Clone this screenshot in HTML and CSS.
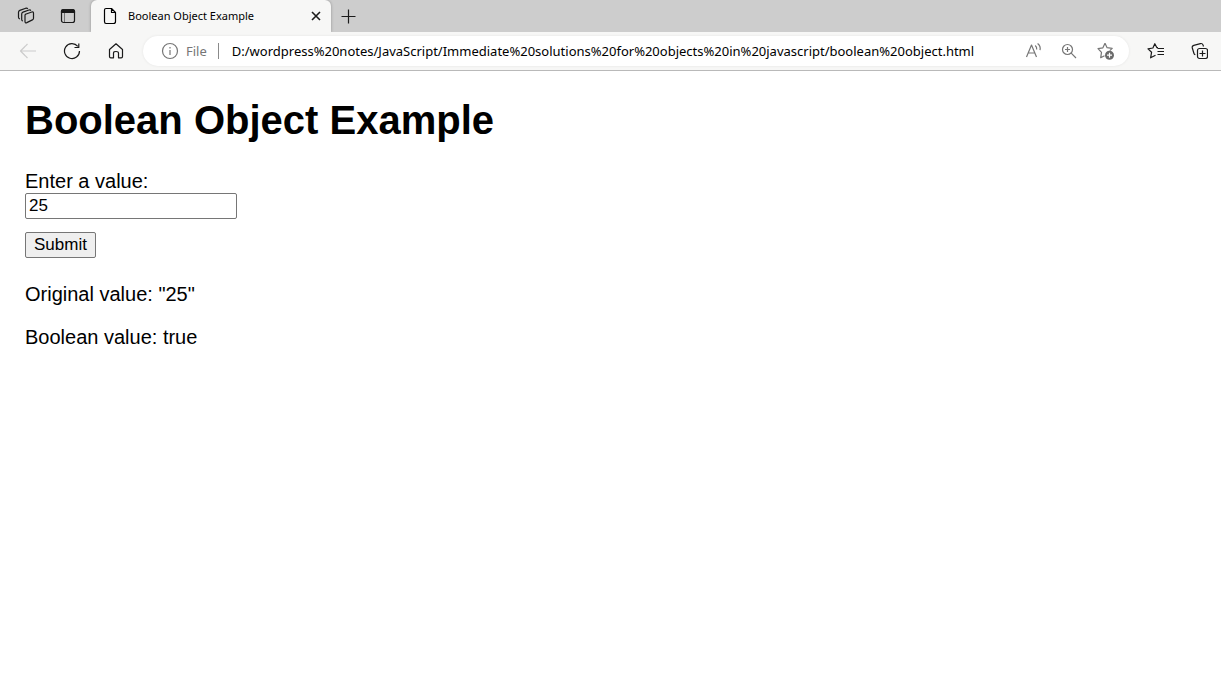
FILE: index.html
```html
<!DOCTYPE html>
<html lang="en">
<head>
  <meta charset="UTF-8">
  <meta name="viewport" content="width=device-width, initial-scale=1.0">
  <title>Boolean Object Example</title>
  <link rel="stylesheet" href="styles.css">
</head>
<body>

  <!-- Browser window -->
  <header class="browser">
    <div class="tab-strip">
      <button class="strip-btn" aria-label="Workspaces">
        <svg width="18" height="18" viewBox="0 0 18 18">
          <path d="M8.5 7.2 L14.8 5 Q16.5 4.6 16.5 6.2 V11.2 Q16.5 12.4 15.4 12.9 L9.8 15.6 Q8 16.3 8 14.6 V8.2 Q8 7.4 8.8 7.1"/>
          <path d="M6 14 Q4.7 13.9 4.7 12.5 V7 Q4.7 5.6 6 5.1 L12 3 Q13.4 2.6 13.8 3.8"/>
          <path d="M3 12 Q1.5 11.8 1.5 10.3 V5.2 Q1.5 3.9 2.8 3.4 L8.8 1.2 Q10.2 .9 10.8 2"/>
        </svg>
      </button>
      <button class="strip-btn" aria-label="Tab actions menu">
        <svg width="16" height="16" viewBox="0 0 16 16">
          <rect x="1.5" y="1.5" width="13" height="13" rx="2"/>
          <path class="solid" d="M1.5 4.4 V3.5 Q1.5 1.5 3.5 1.5 H12.5 Q14.5 1.5 14.5 3.5 V4.4 Z"/>
          <path class="faint" d="M4.5 5 V14"/>
        </svg>
      </button>
      <div class="tab">
        <svg width="16" height="18" viewBox="0 0 16 18">
          <path d="M4 1.5 H9.5 L13.5 5.5 V14.5 Q13.5 16.5 11.5 16.5 H4 Q2.5 16.5 2.5 14.5 V3 Q2.5 1.5 4 1.5 Z M9.5 1.5 V5.5 H13.5"/>
        </svg>
        <span class="tab-title">Boolean Object Example</span>
        <button class="tab-close" aria-label="Close tab">
          <svg width="10" height="10" viewBox="0 0 10 10"><path class="bold" d="M1 1 L9 9 M9 1 L1 9"/></svg>
        </button>
      </div>
      <button class="new-tab" aria-label="New tab">
        <svg width="15" height="15" viewBox="0 0 15 15"><path d="M7.5 .5 V14.5 M.5 7.5 H14.5"/></svg>
      </button>
    </div>

    <div class="toolbar">
      <button class="tool-btn disabled" aria-label="Back" disabled>
        <svg width="18" height="16" viewBox="0 0 18 16"><path d="M17 8 H1.5 M8.5 1 L1.5 8 L8.5 15"/></svg>
      </button>
      <button class="tool-btn" aria-label="Refresh">
        <svg width="18" height="18" viewBox="0 0 18 18"><path d="M16.5 9 A7.5 7.5 0 1 1 14.8 4.3 M15.8 1.5 V5.5 H11.5"/></svg>
      </button>
      <button class="tool-btn" aria-label="Home">
        <svg width="16" height="18" viewBox="0 0 16 18">
          <path d="M1.5 7.5 L8 1.8 L14.5 7.5 V14.5 Q14.5 15.8 13.2 15.8 H10.5 V11 Q10.5 9.5 8 9.5 Q5.5 9.5 5.5 11 V15.8 H2.8 Q1.5 15.8 1.5 14.5 Z"/>
        </svg>
      </button>

      <div class="address-bar">
        <svg width="18" height="18" viewBox="0 0 18 18">
          <circle cx="9" cy="9" r="7.5"/>
          <path d="M9 8 V13 M9 5 V6.5"/>
        </svg>
        <span class="scheme">File</span>
        <input class="url" type="text" aria-label="Address" value="D:/wordpress%20notes/JavaScript/Immediate%20solutions%20for%20objects%20in%20javascript/boolean%20object.html">
        <button class="address-btn" aria-label="Read aloud">
          <svg width="18" height="18" viewBox="0 0 18 18">
            <path d="M2.5 15 L7.5 3 L12.5 15 M4.2 11 H10.8 M11.2 3.5 Q13 5 12.7 7.5 M13.6 1.5 Q17 4.3 16 8.2"/>
          </svg>
        </button>
        <button class="address-btn" aria-label="Zoom">
          <svg width="16" height="16" viewBox="0 0 16 16">
            <circle cx="6.5" cy="6.5" r="5"/>
            <path d="M10.2 10.2 L15 15 M6.5 4 V9 M4 6.5 H9"/>
          </svg>
        </button>
        <button class="address-btn" aria-label="Add to favorites">
          <svg width="18" height="18" viewBox="0 0 18 18">
            <path d="M9 1.3 L11.1 5.7 L16.2 6.4 L13.8 8.6 M8.5 13.7 L4.7 15.7 L5.5 10.4 L2 6.7 L6.9 5.8 L9 1.3"/>
            <circle class="badge" cx="13.5" cy="13.2" r="4.5"/>
            <path class="badge-plus" d="M13.5 10.7 V15.7 M11 13.2 H16"/>
          </svg>
        </button>
      </div>

      <button class="tool-btn" aria-label="Favorites">
        <svg width="18" height="18" viewBox="0 0 18 18">
          <path d="M12 5.5 L10.8 5.6 L8.8 1.7 L6.9 6 L2 6.9 L5.6 10.2 L4.6 15.8 L9.5 13.2 M11.5 6.5 H18 M11.5 9.5 H18 M11.5 12.5 H18"/>
        </svg>
      </button>
      <button class="tool-btn" aria-label="Collections">
        <svg width="18" height="18" viewBox="0 0 18 18">
          <rect x="7.5" y="6.5" width="10" height="10" rx="2"/>
          <path d="M12.5 8.5 V14.5 M9.5 11.5 H15.5 M5.3 12.8 Q4.3 12.4 3.9 11.2 L2.3 6 Q1.8 4 3.8 3.4 L10.4 1.6 Q12.3 1.1 13 2.9 L13.5 4.5"/>
        </svg>
      </button>
    </div>
  </header>

  <!-- Page content -->
  <main class="page">
    <h1>Boolean Object Example</h1>
    <form id="form">
      <label for="value">Enter a value:</label>
      <input class="value-input" type="text" id="value" value="25">
      <button class="submit-btn" type="button">Submit</button>
    </form>
    <p>Original value: "25"</p>
    <p>Boolean value: true</p>
  </main>

</body>
</html>
```
FILE: styles.css
```css
* {
  box-sizing: border-box;
}

body {
  margin: 0;
  background-color: #ffffff;
  color: #000000;
  font-family: "Liberation Sans", Arial, sans-serif;
  font-size: 20px;
  line-height: 23px;
}

/* Browser window */
.browser {
  font-family: "Noto Sans", "Open Sans", sans-serif;
  font-size: 13px;
  line-height: 18px;
  background-color: #f7f7f6;
  border-bottom: 1px solid #b9b9b9;
}

.browser button {
  display: flex;
  flex: none;
  align-items: center;
  justify-content: center;
  padding: 0;
  border: none;
  background: none;
  color: #1b1b1b;
}

.browser svg {
  flex: none;
  fill: none;
  stroke: currentColor;
  stroke-width: 1.2;
  stroke-linejoin: round;
}

.browser .solid {
  fill: currentColor;
}

.browser .faint {
  stroke-width: 1;
  opacity: 0.5;
}

.browser .bold {
  stroke-width: 1.6;
}

.tab-strip {
  display: flex;
  height: 32px;
  padding-left: 5px;
  background-color: #cdcdcd;
}

.strip-btn {
  width: 42px;
}

.tab {
  display: flex;
  align-items: center;
  width: 240px;
  margin-left: 2px;
  padding: 0 8px 0 11px;
  border-radius: 6px 6px 0 0;
  background-color: #f7f7f6;
  box-shadow: 0 0 3px rgba(0, 0, 0, 0.3);
  clip-path: inset(0 -4px);
}

.tab-title {
  flex: 1;
  margin-left: 10px;
  font-size: 11px;
}

.tab-close {
  width: 14px;
}

.new-tab {
  width: 34px;
}

/* Toolbar */
.toolbar {
  display: flex;
  align-items: center;
  height: 38px;
  padding-left: 6px;
}

.tool-btn {
  width: 44px;
  height: 30px;
}

.browser .disabled {
  color: #cccccc;
}

.address-bar {
  display: flex;
  flex: 1;
  align-items: center;
  min-width: 0;
  height: 30px;
  margin: 0 4px 0 5px;
  padding: 0 6px 0 18px;
  border-radius: 15px;
  background-color: #ffffff;
  box-shadow: 0 0 3px rgba(0, 0, 0, 0.08);
  color: #767676;
}

.scheme {
  margin-left: 7px;
  padding-right: 11px;
  border-right: 1px solid #8a8a8a;
  line-height: 16px;
}

.url {
  flex: 1;
  min-width: 0;
  margin-left: 13px;
  padding: 0;
  border: none;
  outline: none;
  background: none;
  color: #000000;
  font: inherit;
}

.browser .address-btn {
  width: 36px;
  height: 30px;
  color: #767676;
}

.browser .badge {
  fill: #6b6b6b;
  stroke: none;
}

.badge-plus {
  stroke: #ffffff;
}

/* Page content */
.page {
  padding: 26px 25px;
}

h1 {
  margin: 0 0 27px;
  font-size: 40px;
  line-height: 46px;
}

form {
  margin-bottom: 25px;
}

label {
  display: block;
}

.value-input {
  display: block;
  width: 212px;
  height: 26px;
  margin-bottom: 13px;
  padding: 1px 3px;
  border: 1px solid #767676;
  border-radius: 2px;
  font-family: inherit;
  font-size: 17px;
}

.submit-btn {
  display: block;
  height: 26px;
  padding: 0 8px;
  border: 1px solid #767676;
  border-radius: 2px;
  background-color: #efefef;
  color: #000000;
  font-family: inherit;
  font-size: 17px;
}

p {
  margin: 0 0 20px;
}
```
